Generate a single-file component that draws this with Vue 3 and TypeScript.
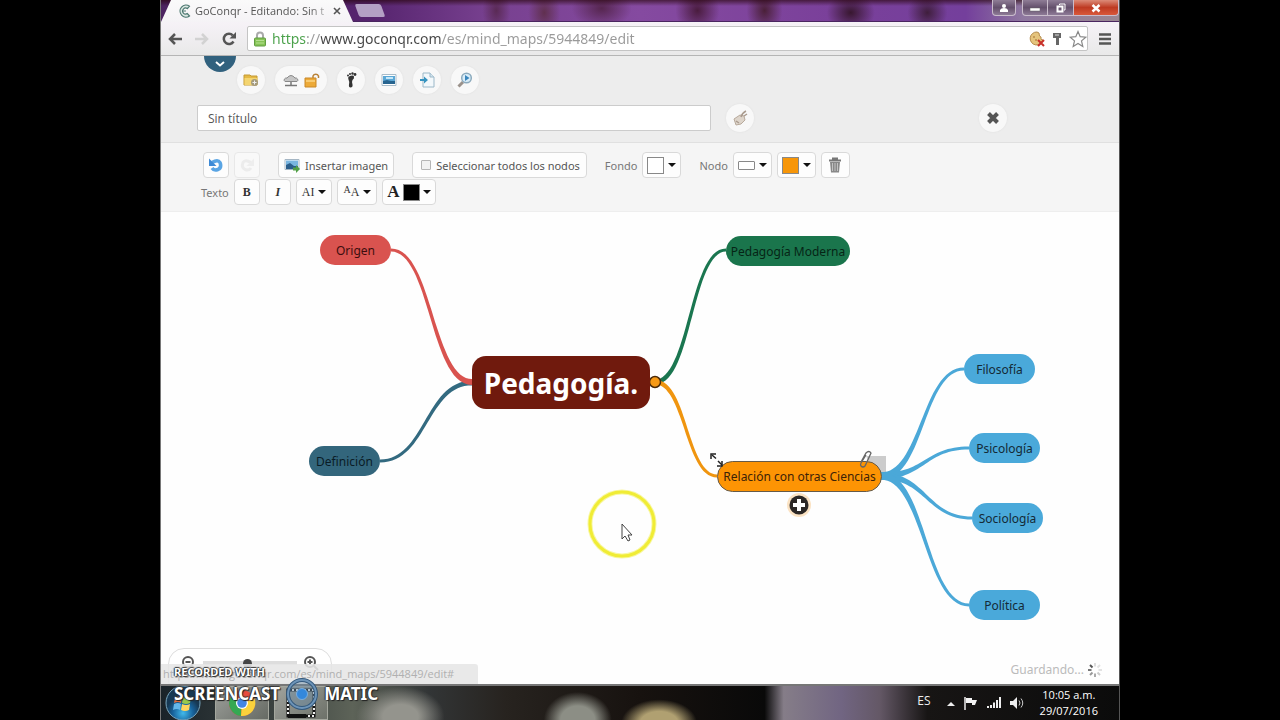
<script setup lang="ts">
import { ref } from 'vue'

interface MapNode {
  id: string
  label: string
  x: number
  y: number
  w: number
  h: number
  kind: string
}

interface Edge {
  from: [number, number]
  to: [number, number]
  start: number
  color: string
}

const nodes: MapNode[] = [
  { id: 'origen', label: 'Origen', x: 159, y: 23, w: 71, h: 30, kind: 'red' },
  { id: 'definicion', label: 'Definición', x: 148, y: 234, w: 71, h: 30, kind: 'slate' },
  { id: 'root', label: 'Pedagogía.', x: 311, y: 144, w: 178, h: 53, kind: 'root' },
  { id: 'moderna', label: 'Pedagogía Moderna', x: 565, y: 24, w: 124, h: 30, kind: 'green' },
  { id: 'relacion', label: 'Relación con otras Ciencias', x: 556, y: 249, w: 165, h: 31, kind: 'orange' },
  { id: 'filosofia', label: 'Filosofía', x: 803, y: 142, w: 71, h: 30, kind: 'blue' },
  { id: 'psicologia', label: 'Psicología', x: 808, y: 221, w: 71, h: 30, kind: 'blue' },
  { id: 'sociologia', label: 'Sociología', x: 811, y: 291, w: 71, h: 30, kind: 'blue' },
  { id: 'politica', label: 'Política', x: 808, y: 378, w: 71, h: 30, kind: 'blue' },
]

const edges: Edge[] = [
  { from: [311, 171], to: [219, 249], start: 5, color: '#336a80' },
  { from: [311, 170], to: [230, 38], start: 6, color: '#d9534f' },
  { from: [494, 170], to: [565, 38], start: 5, color: '#1a7650' },
  { from: [494, 170], to: [556, 264], start: 5, color: '#f0950f' },
  { from: [720, 264], to: [803, 157], start: 8, color: '#4ba8d8' },
  { from: [720, 264], to: [808, 236], start: 8, color: '#4ba8d8' },
  { from: [720, 264], to: [811, 306], start: 8, color: '#4ba8d8' },
  { from: [720, 264], to: [808, 393], start: 8, color: '#4ba8d8' },
]

/* Outline of an S-shaped branch that narrows from its parent to its child. */
function branch(edge: Edge): string {
  const [x1, y1] = edge.from
  const [x2, y2] = edge.to
  const upper: string[] = []
  const lower: string[] = []
  const steps = 32
  for (let i = 0; i <= steps; i++) {
    const t = i / steps
    const u = 1 - t
    const mid = (x1 + x2) / 2
    const x = u * u * u * x1 + 3 * u * t * mid + t * t * t * x2
    const y = (u * u * u + 3 * u * u * t) * y1 + (3 * u * t * t + t * t * t) * y2
    const dx = 3 * u * u * (mid - x1) + 3 * t * t * (x2 - mid)
    const dy = 6 * u * t * (y2 - y1)
    const len = Math.hypot(dx, dy) || 1
    const half = (3 + (edge.start - 3) * u * u * u) / 2
    const nx = (-dy / len) * half
    const ny = (dx / len) * half
    upper.push(`${(x + nx).toFixed(1)} ${(y + ny).toFixed(1)}`)
    lower.unshift(`${(x - nx).toFixed(1)} ${(y - ny).toFixed(1)}`)
  }
  return `M${upper.concat(lower).join('L')}Z`
}

const title = ref('Sin título')
const address = ref('https://www.goconqr.com/es/mind_maps/5944849/edit')
const selectAll = ref(false)
const zoom = ref(47)
</script>

<template>
  <div class="stage">
    <div class="screen">
      <header class="titlebar">
        <div class="tab">
          <svg class="favicon" viewBox="0 0 14 14" width="14" height="14"><path d="M12.5 2.2A6 6 0 1 0 12.5 12L10.300 9.600A3 3 0 1 1 10.300 4.600Z" fill="#dce8e3" stroke="#4e7a72" stroke-width="1.200" /><path d="M9 7h-4" stroke="#4e7a72" /></svg>
          <span class="tab-title">GoConqr - Editando: Sin t</span>
          <button class="plain tab-close" aria-label="Cerrar pestaña"><svg viewBox="0 0 8 8" width="8" height="8"><path d="M1 1l6 6M7 1l-6 6" stroke="#555" stroke-width="1.600" /></svg></button>
        </div>
        <button class="new-tab" aria-label="Nueva pestaña"></button>
        <div class="window-controls">
          <button class="wc user" aria-label="Usuario"><svg viewBox="0 0 10 10" width="10" height="10"><circle cx="5" cy="3" r="2" fill="#fff" /><path d="M1 9V7q1-2 4-2t4 2v2z" fill="#fff" /></svg></button>
          <button class="wc min" aria-label="Minimizar"><svg viewBox="0 0 10 10" width="10" height="10"><path d="M0 5h10v3H0z" fill="#fff" stroke="#666" stroke-width=".5" /></svg></button>
          <button class="wc max" aria-label="Restaurar"><svg viewBox="0 0 10 10" width="10" height="10"><path d="M3.500 2V1H9v6H8" fill="none" stroke="#fff" /><path d="M1.500 3.500h5v5h-5z" fill="none" stroke="#fff" stroke-width="2" /></svg></button>
          <button class="wc close" aria-label="Cerrar"><svg viewBox="0 0 10 10" width="10" height="10"><path d="M1.500 2l7 6.500M8.500 2l-7 6.500" stroke="#fff" stroke-width="2.500" /></svg></button>
        </div>
      </header>

      <nav class="navbar">
        <button class="plain" aria-label="Atrás"><svg viewBox="0 0 14 14" width="14" height="14"><path d="M14 7H2M7 2L2 7l5 5" fill="none" stroke="#555" stroke-width="2.500" /></svg></button>
        <button class="plain" aria-label="Adelante"><svg viewBox="0 0 14 14" width="14" height="14"><path d="M0 7h12M7 2l5 5-5 5" fill="none" stroke="#d2d2d2" stroke-width="2.500" /></svg></button>
        <button class="plain" aria-label="Recargar"><svg viewBox="0 0 14 14" width="14" height="14"><path d="M11.500 9.500A5.200 5.200 0 1 1 10.800 3.300" fill="none" stroke="#555" stroke-width="2.500" /><path d="M14 0v6.500H7.500z" fill="#555" /></svg></button>
        <div class="omnibox">
          <svg viewBox="0 0 12 16" width="12" height="16"><path d="M3 8V4.500a3 3 0 0 1 6 0V8" fill="none" stroke="#aaa" stroke-width="2" /><rect x=".5" y="7" width="11" height="8" rx="1" fill="#86c456" stroke="#619c42" /><path d="M2 9.500h8M2 12h8" stroke="#b5df91" /></svg>
          <input v-model="address" class="address" type="text" aria-label="Dirección" spellcheck="false" />
          <button class="plain" aria-label="Cookies bloqueadas"><svg viewBox="0 0 16 16" width="16" height="16"><path d="M8 1a6.500 6.500 0 1 0 6 8q-3 0-2-3-2 0-2-4z" fill="#e5c47d" stroke="#b58b4b" /><circle cx="5" cy="6" r="1" fill="#b98c4a" /><circle cx="7" cy="9" r="1" fill="#b98c4a" /><path d="M9 9l6 6M15 9l-6 6" stroke="#c8302a" stroke-width="2" /></svg></button>
          <button class="plain" aria-label="Contraseña"><svg viewBox="0 0 12 16" width="12" height="16"><path d="M2 2h8v5H8v7H5V7H2z" fill="#666" /><path d="M4 4h4" stroke="#ddd" /></svg></button>
          <button class="plain" aria-label="Favorito"><svg viewBox="0 0 18 18" width="18" height="18"><path d="M9 1.500l2.200 5.200 5.600.500-4.300 3.700 1.300 5.500L9 13.500l-4.800 2.900 1.300-5.500L1.200 7.200l5.600-.5z" fill="#fff" stroke="#888" stroke-width="1.200" /></svg></button>
        </div>
        <button class="plain menu" aria-label="Menú"><svg viewBox="0 0 12 12" width="12" height="12"><path d="M0 1.500h12M0 6h12M0 10.500h12" stroke="#555" stroke-width="2.500" /></svg></button>
      </nav>

      <main class="page">
        <section class="page-head">
          <button class="expander" aria-label="Desplegar"><svg viewBox="0 0 10 6" width="10" height="6"><path d="M1 1l4 3.500L9 1" fill="none" stroke="#fff" stroke-width="2" /></svg></button>
          <div class="actions">
            <button class="round" aria-label="Carpeta"><svg viewBox="0 0 16 16" width="16" height="16"><path d="M1 3h6l1 1h6v9H1z" fill="#e5b944" stroke="#c49a35" /><path d="M1.500 6h13v7h-13z" fill="#f4d571" /><circle cx="11.500" cy="10.500" r="3.500" fill="#a59b7d" /><path d="M9.500 10.500h4M11.500 8.500v4" stroke="#eee" /></svg></button>
            <button class="round wide" aria-label="Compartir">
              <svg viewBox="0 0 16 16" width="16" height="16"><path d="M2 9.500a2.500 2 0 0 1 2-3.500q4-5 8 0a2.500 2 0 0 1 2 3.500z" fill="#c6c6c6" stroke="#888" /><path d="M8 10v3M2 13.500h12" stroke="#777" stroke-width="1.500" /></svg>
              <svg viewBox="0 0 16 16" width="16" height="16"><path d="M9 7V4a3 3 0 0 1 5.500 0v2" fill="none" stroke="#b98239" stroke-width="1.500" /><path d="M1 6h11v9H1z" fill="#edaa38" stroke="#c98828" /><path d="M2 9h9" stroke="#f8cb72" stroke-width="2" /></svg>
            </button>
            <button class="round" aria-label="Seguir"><svg viewBox="0 0 16 16" width="16" height="16"><path d="M6 4.500q4-2 5 0 .5 2-1.500 3.500-1 1.500 0 4.500.5 3-2 3-2 0-1.500-3Q6.500 9 5.500 7.500 4.500 5.500 6 4.500z" fill="#333" /><circle cx="5" cy="3.500" r="1" fill="#333" /><circle cx="7" cy="2" r="1" fill="#333" /><circle cx="9.500" cy="1.500" r="1.200" fill="#333" /><circle cx="12" cy="2.500" r="1.400" fill="#333" /></svg></button>
            <button class="round" aria-label="Imagen"><svg viewBox="0 0 16 16" width="16" height="16"><path d="M1 2.500h14v11H1z" fill="#fff" stroke="#a9bcc9" /><path d="M2 4h12v8H2z" fill="#5ca8d6" /><path d="M2 9l4-1 4 1h4v3H2z" fill="#27648f" /><path d="M5 6h7" stroke="#c5e7f8" stroke-width="2" /></svg></button>
            <button class="round" aria-label="Exportar"><svg viewBox="0 0 16 16" width="16" height="16"><path d="M4 1h7l4 4v10H4z" fill="#f3f8fb" stroke="#9bb8c8" /><path d="M11 1v4h4" fill="#d4e4ee" stroke="#9bb8c8" /><path d="M1 7h4V4.500L9 8l-4 3.500V9H1z" fill="#3794c0" /></svg></button>
            <button class="round" aria-label="Buscar"><svg viewBox="0 0 16 16" width="16" height="16"><path d="M6 10l-4.500 4.500" stroke="#9b928b" stroke-width="3" /><circle cx="9.500" cy="6" r="4.800" fill="#d9edf9" stroke="#8caabd" stroke-width="1.500" /><path d="M8 3l4.500 3L8 9z" fill="#3a86bd" /></svg></button>
          </div>
          <div class="title-row">
            <input v-model="title" class="title-input" type="text" aria-label="Título" spellcheck="false" />
            <button class="round" aria-label="Etiquetar"><svg viewBox="0 0 16 16" width="16" height="16"><path d="M2 9l6-4 4 1 1 4-4 4-5 1z" fill="#ded5cb" stroke="#b8aa9c" /><path d="M9 7q1-4 5-6M4 11l3 2M12 6l3-2" stroke="#aa9b8e" fill="none" stroke-width="1.500" /></svg></button>
            <button class="round shut" aria-label="Cerrar editor"><svg viewBox="0 0 14 14" width="14" height="14"><path d="M2.500 2.500l9 9M11.500 2.500l-9 9" stroke="#555" stroke-width="4" /></svg></button>
          </div>
        </section>

        <section class="tools" aria-label="Herramientas">
          <div class="tool-row">
            <div class="group">
              <button class="tool" aria-label="Deshacer"><svg viewBox="0 0 16 16" width="16" height="16"><path d="M4 5.500q6-3.500 8 0 2 5-2 7-4 1.500-6-1.500" fill="none" stroke="#5aa5e4" stroke-width="3.500" /><path d="M1 1.500V9h7.500z" fill="#3d8ad6" /></svg></button>
              <button class="tool faint" aria-label="Rehacer"><svg viewBox="0 0 16 16" width="16" height="16"><path d="M12 5.500q-6-3.500-8 0-2 5 2 7 4 1.500 6-1.500" fill="none" stroke="#ececec" stroke-width="3" /><path d="M15 1.500V9H7.500z" fill="#eee" /></svg></button>
            </div>
            <button class="tool labelled"><svg viewBox="0 0 16 16" width="16" height="16"><path d="M1 2.500h14v10H1z" fill="#fff" stroke="#a5b6c4" /><path d="M2 3.500h12v8H2z" fill="#78b5e0" /><path d="M2 8l4-2 4 3h4v3H2z" fill="#2b5e8b" /><path d="M9 10.500h3V8l4 4-4 4v-2.500H9z" fill="#52a047" /></svg>Insertar imagen</button>
            <label class="tool labelled check"><input v-model="selectAll" type="checkbox" />Seleccionar todos los nodos</label>
            <div class="group">
              <span class="caption">Fondo</span>
              <button class="tool drop" aria-label="Color de fondo" aria-haspopup="true"><span class="swatch white"></span><span class="caret"></span></button>
            </div>
            <div class="group">
              <span class="caption">Nodo</span>
              <button class="tool drop" aria-label="Forma del nodo" aria-haspopup="true"><span class="shape"></span><span class="caret"></span></button>
              <button class="tool drop" aria-label="Color del nodo" aria-haspopup="true"><span class="swatch amber"></span><span class="caret"></span></button>
              <button class="tool bin" aria-label="Eliminar"><svg viewBox="0 0 16 16" width="16" height="16"><path d="M2 3.500h12M6 2.500v-1h4v1" fill="none" stroke="#777" stroke-width="2" /><path d="M3 5h10l-1 10.500H4z" fill="#888" /><path d="M5.500 6v8M8 6v8M10.500 6v8" stroke="#c2c2c2" /></svg></button>
            </div>
          </div>
          <div class="tool-row">
            <div class="group">
              <span class="caption">Texto</span>
              <button class="tool serif" aria-label="Negrita"><b>B</b></button>
              <button class="tool serif" aria-label="Cursiva"><b><i>I</i></b></button>
              <button class="tool drop serif" aria-label="Fuente" aria-haspopup="true"><span>AI</span><span class="caret"></span></button>
              <button class="tool drop serif" aria-label="Tamaño" aria-haspopup="true"><span class="sizes"><small>A</small>A</span><span class="caret"></span></button>
              <button class="tool drop serif ink" aria-label="Color de texto" aria-haspopup="true"><b>A</b><span class="swatch black"></span><span class="caret"></span></button>
            </div>
          </div>
        </section>

        <section class="canvas" aria-label="Mapa mental">
          <svg class="edges" width="100%" height="100%">
            <path d="M705 244h20v24h-8z" fill="#ccc" />
            <path v-for="(edge, i) in edges" :key="i" :d="branch(edge)" :fill="edge.color" />
            <circle cx="494" cy="170" r="5.500" fill="#f79a16" stroke="#4a2a0a" stroke-width="1.500" />
          </svg>
          <div
            v-for="node in nodes"
            :key="node.id"
            class="node"
            :class="node.kind"
            :style="{ left: node.x + 'px', top: node.y + 'px', width: node.w + 'px', height: node.h + 'px' }"
          >{{ node.label }}</div>
          <svg class="edges over" width="100%" height="100%">
            <path d="M551 243l4 3.500M557 249l4 4" stroke="#222" stroke-width="1.500" />
            <path d="M550 247v-5h5M561 249v5h-5" fill="none" stroke="#222" stroke-width="1.500" />
            <path d="M700 250l5-9q3-3 5 0l-6 13q-2 2-4 0-1-1 0-3l5-8" fill="none" stroke="#666" stroke-width="1.300" />
            <circle cx="638" cy="293" r="12" fill="#fbe3c4" />
            <circle cx="638" cy="293" r="9.500" fill="#2b2725" />
            <path d="M638 287v12M632 293h12" stroke="#fff" stroke-width="4" />
            <circle cx="461" cy="312" r="32" fill="none" stroke="#f8f7a0" stroke-width="5" />
            <circle cx="461" cy="312" r="32" fill="none" stroke="#f0ec35" stroke-width="3" />
            <path d="M461 312v15l3-3 3 5 2-1-2-5h4z" fill="#fff" stroke="#444" />
          </svg>

          <div class="zoomer">
            <button class="plain" aria-label="Alejar"><svg viewBox="0 0 16 16" width="16" height="16"><circle cx="7" cy="7" r="5" fill="#fff" stroke="#555" stroke-width="2" /><path d="M4.500 7h5M11 11l4 4" stroke="#555" stroke-width="2" /></svg></button>
            <input v-model="zoom" type="range" min="0" max="100" aria-label="Zoom" />
            <button class="plain" aria-label="Acercar"><svg viewBox="0 0 16 16" width="16" height="16"><circle cx="7" cy="7" r="5" fill="#fff" stroke="#555" stroke-width="2" /><path d="M4.500 7h5M7 4.500v5M11 11l4 4" stroke="#555" stroke-width="2" /></svg></button>
          </div>
          <div class="link-hint">https://www.goconqr.com/es/mind_maps/5944849/edit#</div>
          <div class="saving">Guardando...<svg viewBox="0 0 14 14" width="14" height="14"><g stroke-width="2"><path d="M7 0v3.500" stroke="#ddd" /><path d="M2 2l2.500 2.500" stroke="#555" /><path d="M0 7h3.500" stroke="#777" /><path d="M2 12l2.500-2.500" stroke="#999" /><path d="M7 10.500V14" stroke="#aaa" /><path d="M12 12L9.500 9.500" stroke="#ccc" /><path d="M10.500 7H14M12 2L9.500 4.500" stroke="#e2e2e2" /></g></svg></div>
        </section>
      </main>

      <footer class="taskbar">
        <button class="plain orb" aria-label="Inicio"><svg viewBox="0 0 36 36" width="36" height="36"><defs><radialGradient id="orb" cy=".8"><stop offset="0" stop-color="#41b9eb" /><stop offset=".6" stop-color="#17629b" /><stop offset="1" stop-color="#173954" /></radialGradient></defs><circle cx="18" cy="18" r="17" fill="url(#orb)" stroke="#78a5bd" /><path d="M10 13q4-3 7-1l-1 6q-3-2-7 0z" fill="#ec713d" /><path d="M18 12q4 2 8 0l-1 6q-4 2-8 0z" fill="#98c94b" /><path d="M9 19q4-2 7 0l-1 6q-3-2-7 0z" fill="#64b7e9" /><path d="M17 19q4 2 8 0l-1 6q-4 2-8 0z" fill="#ffd45b" /></svg></button>
        <button class="task" aria-label="Chrome"><svg viewBox="0 0 30 30" width="30" height="30"><circle cx="15" cy="15" r="13" fill="#e84d3d" /><path d="M15 15L3.500 9A13 13 0 0 0 14 28z" fill="#35a853" /><path d="M15 15l12.500-4.500A13 13 0 0 1 14 28z" fill="#fbd23c" /><circle cx="15" cy="15" r="6" fill="#fff" /><circle cx="15" cy="15" r="4.800" fill="#4385e5" /></svg></button>
        <button class="task recorder" aria-label="Grabador"><svg viewBox="0 0 30 30" width="30" height="30"><path d="M2 2h26v26H2z" fill="none" stroke="#111" stroke-width="3" /><path d="M2 2h26v26H2z" fill="none" stroke="#eee" stroke-width="2" stroke-dasharray="2 2" /><path d="M2 28h18" stroke="#111" stroke-width="4" /></svg></button>
        <div class="tray">
          <span class="lang">ES</span>
          <svg viewBox="0 0 8 8" width="8" height="8"><path d="M0 7l4-4 4 4z" fill="#eee" /></svg>
          <svg viewBox="0 0 14 14" width="14" height="14"><path d="M1 1v13" stroke="#eee" stroke-width="1.500" /><path d="M2 2h6v2h5l-2 5H8V7H2z" fill="#f4f4f4" /></svg>
          <svg viewBox="0 0 14 14" width="14" height="14"><path d="M1 12v-2M4 12V9M7 12V6.500M10 12V4M13 12V1" stroke="#eee" stroke-width="2" /></svg>
          <svg viewBox="0 0 14 14" width="14" height="14"><path d="M0 5h3l4-4v12L3 9H0z" fill="#eee" /><path d="M9 4.500q2 2.500 0 5M11 2.500q3.500 4.500 0 9" fill="none" stroke="#ccc" /></svg>
          <div class="clock"><span>10:05 a.m.</span><span>29/07/2016</span></div>
        </div>
      </footer>

      <div class="watermark">
        <span class="wm-top">RECORDED WITH</span>
        <div class="wm-main"><span>SCREENCAST</span><svg viewBox="0 0 34 34" width="34" height="34"><circle cx="17" cy="17" r="14" fill="#6b8ba7" fill-opacity=".45" stroke="#34597c" stroke-width="4" /><circle cx="17" cy="17" r="14" fill="none" stroke="#6d94b8" stroke-width="2" /><circle cx="17" cy="17" r="5.500" fill="#3488dc" stroke="#79aee0" /></svg><span>MATIC</span></div>
      </div>
    </div>
  </div>
</template>

<style>
body { background: #000; }
</style>

<style scoped>
* { box-sizing: border-box; }
.stage { display: flex; justify-content: center; min-height: 100vh; background: #000; font-family: "Open Sans", "Noto Sans", sans-serif; font-size: 12px; color: #555; }
.screen { position: relative; display: flex; flex-direction: column; width: 75%; overflow: hidden; border-left: 1px solid #777; border-right: 1px solid #555; }
button, input { font: inherit; color: inherit; margin: 0; }
button { padding: 0; border: 0; cursor: pointer; }
svg { display: block; flex: none; }
.plain { background: none; }

.titlebar { display: flex; align-items: flex-start; height: 22px; border-bottom: 1px solid #4a2560; background:
  linear-gradient(#2009 0, transparent 6px),
  radial-gradient(ellipse 30px 20px at 46% 40%, #56264f, transparent),
  radial-gradient(ellipse 14px 24px at 35% 50%, #5a2a55, transparent),
  radial-gradient(ellipse 16px 24px at 40% 60%, #60304f, transparent),
  radial-gradient(ellipse 22px 24px at 56% 50%, #4a1c3e, transparent),
  radial-gradient(ellipse 18px 24px at 63% 50%, #4a2038, transparent),
  radial-gradient(ellipse 24px 20px at 72% 60%, #38172f, transparent),
  radial-gradient(ellipse 20px 20px at 80% 60%, #3f1e3c, transparent),
  linear-gradient(90deg, #4c2360, #56246e 22%, #77408f 34%, #854aa0 50%, #7a409a 70%, #743f9c 84%, #8f78a0 90%, #9a8792); }
.tab { display: flex; align-items: center; gap: 4px; width: 192px; height: 22px; padding: 0 12px 0 16px; background: linear-gradient(#fafafa, #f5f3f6); clip-path: polygon(10px 0, 182px 0, 192px 100%, 0 100%); }
.tab-title { flex: 1; white-space: nowrap; font-size: 11px; line-height: 20px; mask-image: linear-gradient(90deg, #000 85%, #0004); }
.new-tab { width: 26px; height: 13px; margin: 4px 0 0 4px; border-radius: 2px; transform: skewX(20deg); background: #b4a0c4; }
.window-controls { display: flex; margin-left: auto; height: 16px; }
.wc { display: grid; place-items: center; width: 26px; height: 16px; border: 1px solid #c9bccb; border-top: 0; background: linear-gradient(#8f7d96, #64506c 50%, #8d7a96); }
.user { width: 24px; margin-right: 6px; border-radius: 0 0 4px 4px; }
.min { border-radius: 0 0 0 4px; }
.max { border-left: 0; }
.close { width: 45px; border-left: 0; border-radius: 0 0 4px; background: linear-gradient(#dc8b78, #be3a22 50%, #d8583a); }

.navbar { display: flex; align-items: center; gap: 13px; height: 34px; padding: 0 8px 0 7px; border-bottom: 1px solid #b5b5b5; background: linear-gradient(#f6f2f7, #e9e9e9); }
.omnibox { display: flex; flex: 1; align-items: center; gap: 6px; height: 25px; margin-left: -2px; padding: 0 0 0 6px; border: 1px solid #c4c4c4; border-radius: 2px; background: #fff; }
.address { flex: 1; min-width: 0; height: 22px; padding: 0; border: 0; outline: 0; font-family: "Noto Sans", sans-serif; font-size: 14px; color: transparent; background: linear-gradient(90deg, #4aa14a 35px, #999 35px 49px, #444 49px 170px, #999 170px) text; }
.menu { margin-left: -2px; }

.page { display: flex; flex: 1; flex-direction: column; }
.page-head { position: relative; display: flex; flex-direction: column; gap: 11px; padding: 10px 36px 11px; background: #ededed; }
.expander { position: absolute; top: 0; left: 43px; display: grid; place-items: center; width: 32px; height: 16px; border-radius: 0 0 16px 16px; background: #31617e; }
.actions { display: flex; gap: 10px; padding-left: 40px; }
.round { display: grid; place-items: center; flex: none; width: 28px; height: 28px; border-radius: 14px; background: #f8f8f8; box-shadow: 0 0 2px #ddd; }
.wide { display: flex; justify-content: center; gap: 5px; width: 52px; }
.title-row { display: flex; align-items: center; height: 26px; }
.title-input { width: 514px; height: 26px; padding: 0 10px; border: 1px solid #ccc; border-radius: 2px; outline: 0; background: #fff; }
.title-input + .round { margin-left: 15px; }
.shut { margin-left: auto; margin-right: 76px; }

.tools { display: flex; flex-direction: column; gap: 1px; padding: 9px 40px 6px; border-top: 1px solid #e0e0e0; border-bottom: 1px solid #eee; background: #f5f5f5; font-family: "Noto Sans", sans-serif; font-size: 11px; }
.tool-row { display: flex; }
.tool-row > * + * { margin-left: 18px; }
.group { display: flex; align-items: center; gap: 5px; }
.tool { display: flex; align-items: center; justify-content: center; gap: 5px; min-width: 26px; height: 26px; border: 1px solid #d9d9d9; border-radius: 4px; background: #fdfdfd; white-space: nowrap; }
.tool-row:first-child .group:first-child { padding-left: 2px; }
.faint { border-color: #e8e8e8; background: #f9f9f9; }
.labelled { padding: 0 5px; }
.check { padding: 0 6px 0 8px; }
.check input { appearance: none; width: 10px; height: 10px; border: 1px solid #b5b5b5; border-radius: 1px; background: #f1f1f1; }
.caption { color: #777; }
.drop { gap: 4px; padding: 0 4px; }
.bin { min-width: 29px; }
.caret { border: 4px solid transparent; border-top-color: #111; border-bottom: 0; }
.swatch { width: 17px; height: 17px; border: 1px solid #888; }
.white { background: #fff; }
.amber { background: #f79608; }
.black { background: #000; }
.shape { width: 17px; height: 9px; border: 1px solid #888; border-radius: 1px; background: #fff; }
.serif { font-family: "Liberation Serif", serif; font-size: 12px; color: #333; }
.serif.drop { padding: 0 5px; }
.sizes small { font-size: 10px; vertical-align: 3px; }
.serif.ink { gap: 3px; padding: 0 4px; font-size: 17px; color: #222; }

.canvas { position: relative; flex: 1; min-height: 440px; background: #fefefe; }
.edges { position: absolute; inset: 0; }
.over { pointer-events: none; }
.node { position: absolute; display: grid; place-items: center; border-radius: 15px; white-space: nowrap; color: #142a36; font-family: "Noto Sans", sans-serif; }
.red { background: #d9534f; color: #3c0e0e; }
.slate { background: #33667c; color: #0a1c26; }
.root { border-radius: 14px; background: #701a0d; color: #fff; font-size: 28px; font-weight: 700; }
.green { background: #1a754c; color: #062516; }
.orange { border: 1px solid #665a48; border-radius: 16px; background: #fd9404; color: #3c2208; }
.blue { background: #4aa9da; }

.zoomer { position: absolute; bottom: 0; left: 7px; display: flex; align-items: flex-start; justify-content: space-between; width: 164px; height: 36px; padding: 6px 12px; border: 1px solid #ddd; border-radius: 16px 16px 0 0; background: #fff; }
.zoomer input { width: 94px; height: 16px; appearance: none; background: linear-gradient(#ddd, #ddd) center / 100% 4px no-repeat; }
.zoomer input::-webkit-slider-thumb { appearance: none; width: 9px; height: 9px; border-radius: 5px; background: #444; }
.link-hint { position: absolute; bottom: 0; left: 0; width: 317px; height: 20px; padding-left: 2px; border-radius: 0 3px 0 0; overflow: hidden; white-space: nowrap; background: #e6e6e6e0; color: #b0b0b0; font-size: 11px; line-height: 19px; }
.saving { position: absolute; right: 17px; bottom: 5px; display: flex; align-items: center; gap: 4px; color: #bbb; font-family: "Noto Sans", sans-serif; line-height: 18px; }

.taskbar { display: flex; align-items: center; height: 36px; padding: 0 8px 0 4px; overflow: hidden; border-top: 2px solid #777; background:
  radial-gradient(ellipse 34px 28px at 43.500% 100%, #8c8e85 50%, transparent),
  radial-gradient(ellipse 38px 24px at 52% 110%, #b0a071 50%, transparent),
  radial-gradient(ellipse 44px 30px at 25% 90%, #94948d 40%, transparent),
  linear-gradient(90deg, #1a2329, #3b4240 12%, #5d6358 20%, #323536 28%, #27231f 36%, #17120f 50%, #090909 63%, #857d88 65%, #716582 71%, #645866 75%, #171514 80%, #0b0b0b); }
.orb { width: 36px; height: 36px; margin-right: 14px; }
.task { display: grid; place-items: center; width: 54px; height: 34px; margin-right: 5px; border: 1px solid #a4a79e; background: linear-gradient(135deg, #bbbcb5cc, #777a72bb); }
.tray { display: flex; align-items: center; gap: 9px; margin-left: auto; color: #eee; }
.lang { margin-right: 7px; padding-bottom: 6px; }
.clock { display: flex; flex-direction: column; align-items: center; margin: 0 13px 0 7px; font-size: 11px; line-height: 16px; color: #fff; }

.watermark { position: absolute; left: 13px; bottom: 9px; display: flex; flex-direction: column; pointer-events: none; color: #fff; font-family: "Noto Sans", sans-serif; font-weight: 700; text-shadow: 1px 1px 1px #222, -1px 0 1px #333, 0 -1px 1px #333; }
.wm-top { font-size: 11px; line-height: 11px; }
.wm-main { display: flex; align-items: center; gap: 5px; font-size: 17px; line-height: 34px; }
</style>
